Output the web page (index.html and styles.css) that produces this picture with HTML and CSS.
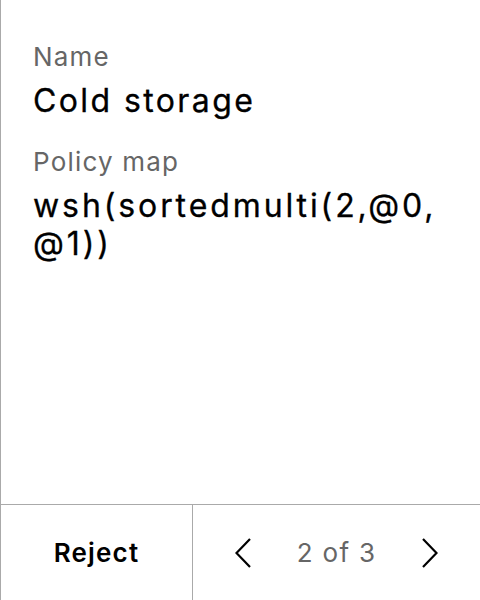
FILE: index.html
```html
<!DOCTYPE html>
<html lang="en">
<head>
<meta charset="utf-8">
<link rel="stylesheet" href="styles.css">
</head>
<body>
<div class="screen">
  <div class="content">
    <div class="field">
      <div class="label">Name</div>
      <div class="value">Cold storage</div>
    </div>
    <div class="field">
      <div class="label">Policy map</div>
      <div class="value policy">wsh(sortedmulti(2,@0,<wbr>@1))</div>
    </div>
  </div>
  <div class="footer">
    <div class="reject">Reject</div>
    <div class="pager">
      <svg class="chev" width="16" height="30" viewBox="0 0 16 30"><path d="M15 1 L1.5 15 L15 29" fill="none" stroke="#000" stroke-width="2.2"/></svg>
      <span class="count">2 of 3</span>
      <svg class="chev" width="16" height="30" viewBox="0 0 16 30"><path d="M1 1 L14.5 15 L1 29" fill="none" stroke="#000" stroke-width="2.2"/></svg>
    </div>
  </div>
</div>
</body>
</html>
```
FILE: styles.css
```css
html, body {
  margin: 0;
  padding: 0;
  background: #fff;
}
body {
  font-family: Inter, "Noto Sans", sans-serif;
  color: #000;
}
.screen {
  width: 480px;
  height: 600px;
  box-sizing: border-box;
  border-left: 1px solid #aaa;
  display: flex;
  flex-direction: column;
}
.content {
  flex: 1;
  padding: 41px 32px 0 32px;
  display: flex;
  flex-direction: column;
  gap: 26px;
}
.label {
  font-size: 26px;
  line-height: 32px;
  letter-spacing: 1.2px;
  color: #666;
}
.value {
  font-size: 32px;
  line-height: 38px;
  letter-spacing: 2.4px;
  margin-top: 9px;
  overflow-wrap: anywhere;
  -webkit-text-stroke: 0.3px #000;
}
.policy {
  letter-spacing: 2.9px;
}
.footer {
  height: 96px;
  box-sizing: border-box;
  border-top: 1px solid #aaa;
  display: grid;
  grid-template-columns: 192px 1fr;
}
.reject {
  border-right: 1px solid #aaa;
  display: flex;
  align-items: center;
  justify-content: center;
  font-size: 26px;
  font-weight: 600;
  letter-spacing: 1.2px;
}
.pager {
  display: flex;
  align-items: center;
  justify-content: center;
  gap: 46px;
}
.count {
  font-size: 26px;
  letter-spacing: 1.3px;
  color: #666;
}
.chev {
  display: block;
}
```
